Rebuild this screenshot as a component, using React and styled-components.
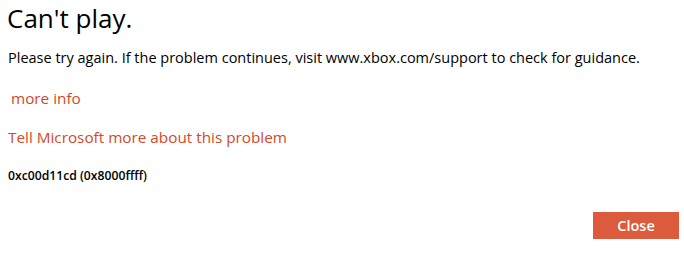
import React from "react";
import styled, { createGlobalStyle } from "styled-components";

const GlobalStyle = createGlobalStyle`
  html, body {
    margin: 0;
    padding: 0;
    background: #ffffff;
  }
  body {
    font-family: "Open Sans", "Noto Sans", sans-serif;
    color: #000000;
  }
`;

const Dialog = styled.div`
  width: 684px;
  height: 253px;
  box-sizing: border-box;
  padding: 0 5px 0 8px;
  display: flex;
  flex-direction: column;
`;

const Title = styled.h1`
  margin: 0 0 0 -1px;
  font-size: 26px;
  font-weight: 400;
  line-height: 36px;
  letter-spacing: 0;
`;

const Message = styled.p`
  margin: 12px 0 0;
  font-size: 14.5px;
  line-height: 20px;
  letter-spacing: 0;
`;

const Link = styled.a`
  display: block;
  margin-top: ${(p) => p.$top}px;
  padding-left: ${(p) => p.$indent || 0}px;
  font-size: 15.3px;
  line-height: 20px;
  color: #d04a2b;
  text-decoration: none;
  cursor: pointer;
`;

const ErrorCode = styled.div`
  margin-top: 21px;
  font-size: 12.2px;
  font-weight: 600;
  line-height: 16px;
`;

const Footer = styled.div`
  margin-top: auto;
  margin-bottom: 14px;
  display: flex;
  justify-content: flex-end;
`;

const CloseButton = styled.button`
  width: 86px;
  height: 27px;
  border: none;
  background: #dc5b3d;
  color: #ffffff;
  font-family: inherit;
  font-size: 14.5px;
  font-weight: 600;
  cursor: pointer;
`;

export default function App() {
  return (
    <>
      <GlobalStyle />
      <Dialog>
        <Title>Can't play.</Title>
        <Message>
          Please try again. If the problem continues, visit www.xbox.com/support to check for guidance.
        </Message>
        <Link $top={20} $indent={3}>more info</Link>
        <Link $top={19}>Tell Microsoft more about this problem</Link>
        <ErrorCode>0xc00d11cd (0x8000ffff)</ErrorCode>
        <Footer>
          <CloseButton>Close</CloseButton>
        </Footer>
      </Dialog>
    </>
  );
}
